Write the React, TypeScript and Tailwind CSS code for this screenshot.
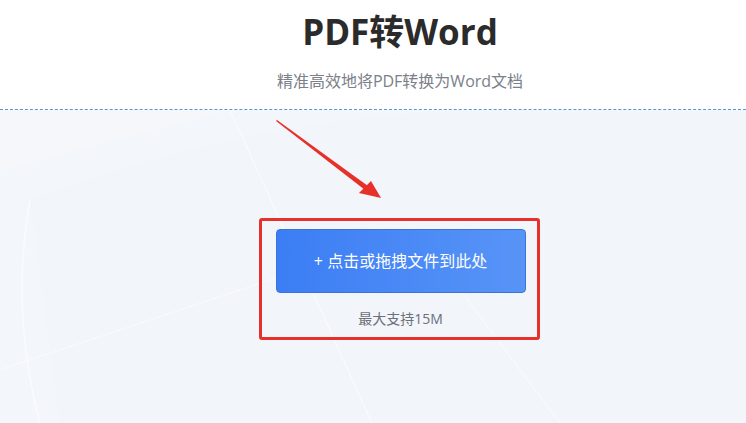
import React from 'react';

const font = { fontFamily: '"Open Sans", "Noto Sans CJK SC", sans-serif' };

function Arrow() {
  // tapered red annotation arrow, tip pointing down-right
  return (
    <svg className="absolute left-[270px] top-[4px]" width="120" height="92" viewBox="0 0 120 92">
      <polygon points="7,6 98,72 95,76 6,7" fill="#e8302a" />
      <polygon points="111,84 89,79 101,67" fill="#e8302a" />
    </svg>
  );
}

function Backdrop() {
  return (
    <svg className="absolute inset-0 h-full w-full" viewBox="0 0 746 313" preserveAspectRatio="none">
      <path d="M0 60 L230 0 L746 0 L746 313 L0 313 Z" fill="#f3f6fb" />
      <path d="M30 90 Q240 10 470 0 L746 0 L746 313 L60 313 Z" fill="#f2f5fa" opacity="0.6" />
      <line x1="230" y1="0" x2="372" y2="313" stroke="#ffffff" strokeWidth="1.2" opacity="0.6" />
      <line x1="430" y1="140" x2="560" y2="313" stroke="#ffffff" strokeWidth="1.2" opacity="0.5" />
      <line x1="0" y1="260" x2="330" y2="150" stroke="#ffffff" strokeWidth="1.2" opacity="0.5" />
      <path d="M30 90 Q10 200 40 313" stroke="#ffffff" strokeWidth="1.5" fill="none" opacity="0.6" />
    </svg>
  );
}

export default function App() {
  return (
    <div className="flex h-[423px] w-[746px] flex-col overflow-hidden bg-white" style={font}>
      <header className="flex h-[109px] flex-col items-center pl-[54px]">
        <h1 className="mt-[10px] text-[35px] font-bold leading-[44px] text-[#2b2b2b]">PDF转Word</h1>
        <p className="mt-[17px] text-[16px] leading-[20px] text-[#7b8089]">精准高效地将PDF转换为Word文档</p>
      </header>
      <div className="border-t border-dashed border-[#5b95cf]" />
      <main className="relative flex flex-1 flex-col items-center bg-[#f5f7fb] pl-[52px]">
        <Backdrop />
        <Arrow />
        <div className="relative mt-[108px] flex w-[281px] flex-col items-center rounded-[3px] border-[3px] border-[#e6302b] pb-[9px] pl-[14px] pr-[11px] pt-[8px]">
          <button className="flex h-[64px] w-full items-center justify-center rounded-[4px] border border-[#3a74d6] bg-gradient-to-r from-[#3b7df4] to-[#5894f7] text-[16px] text-white">
            + 点击或拖拽文件到此处
          </button>
          <span className="mt-[16px] text-[14px] leading-[19px] text-[#6b7079]">最大支持15M</span>
        </div>
      </main>
    </div>
  );
}
